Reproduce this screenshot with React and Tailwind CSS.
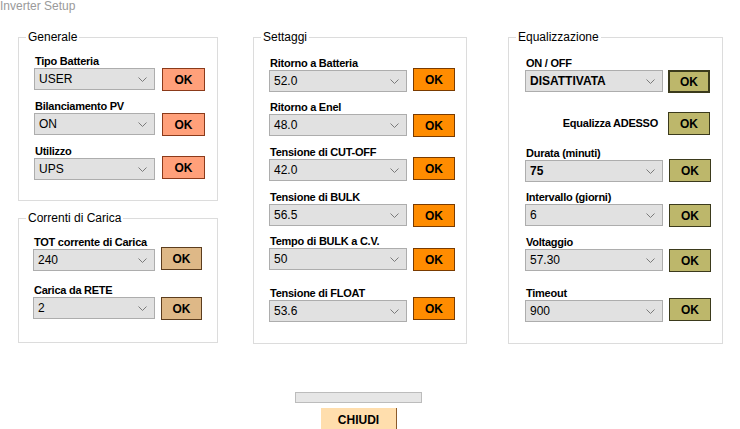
import React from "react";

const font = { fontFamily: '"Liberation Sans", Arial, sans-serif' };

// button palettes per section
const tones = {
  salmon: "bg-[#ffa07a] border-[#8b3a1a]",
  wood: "bg-[#deb887] border-[#5c3d1e]",
  orange: "bg-[#ff8c00] border-[#7a3b00]",
  khaki: "bg-[#bdb76b] border-[#3b3a1c]",
};

function Chevron() {
  return (
    <svg width="9" height="5" viewBox="0 0 9 5" className="shrink-0">
      <polyline points="0.5,0.5 4.5,4.5 8.5,0.5" fill="none" stroke="#7a7a7a" strokeWidth="1" />
    </svg>
  );
}

function Combo({ value, width, bold }) {
  return (
    <div
      className={`h-[22px] ${width} flex items-center justify-between pl-[4px] pr-[7px] bg-[#e1e1e1] border border-[#adadad] text-[12px] text-black ${bold ? "font-bold" : ""}`}
    >
      <span className="leading-none">{value}</span>
      <Chevron />
    </div>
  );
}

function OkButton({ tone, width = "w-[43px]", thick, className = "" }) {
  return (
    <button
      className={`h-[23px] ${width} ${tones[tone]} ${thick ? "border-2" : "border"} text-[12px] font-bold text-black leading-none flex items-center justify-center ${className}`}
    >
      OK
    </button>
  );
}

function Field({ label, value, comboW, tone, okW, gap, mt, btnClass, bold, thick }) {
  return (
    <div className={`flex flex-col ${mt}`}>
      <div className="h-[13px] leading-[12px] text-[11px] font-bold tracking-[-0.25px] text-black pl-[1px] whitespace-nowrap">{label}</div>
      <div className={`flex items-start ${gap}`}>
        <Combo value={value} width={comboW} bold={bold} />
        <OkButton tone={tone} width={okW} thick={thick} className={btnClass} />
      </div>
    </div>
  );
}

function GroupBox({ title, className, children }) {
  return (
    <fieldset className={`border border-[#dcdcdc] ${className}`}>
      <legend className="ml-[7px] px-[2px] text-[12px] leading-[14px] text-black">{title}</legend>
      {children}
    </fieldset>
  );
}

export default function App() {
  return (
    <div className="w-[740px] h-[429px] overflow-hidden bg-white flex flex-col" style={font}>
      <div className="text-[12px] leading-[13px] text-[#9a9a9a] h-[12px]">Inverter Setup</div>

      <div className="flex items-start pl-[18px] mt-[18px]">
        {/* left column */}
        <div className="flex flex-col w-[200px]">
          <GroupBox title="Generale" className="h-[171px]">
            <div className="flex flex-col pl-[15px] pt-[11px]">
              <Field label="Tipo Batteria" value="USER" comboW="w-[121px]" tone="salmon" gap="gap-[7px]" mt="" />
              <Field label="Bilanciamento PV" value="ON" comboW="w-[121px]" tone="salmon" gap="gap-[7px]" mt="mt-[9px]" />
              <Field label="Utilizzo" value="UPS" comboW="w-[121px]" tone="salmon" gap="gap-[7px]" mt="mt-[9px]" btnClass="-mt-[2px]" />
            </div>
          </GroupBox>
          <GroupBox title="Correnti di Carica" className="h-[132px] mt-[10px]">
            <div className="flex flex-col pl-[14px] pt-[11px]">
              <Field label="TOT corrente di Carica" value="240" comboW="w-[122px]" tone="wood" okW="w-[41px]" gap="gap-[6px]" mt="" btnClass="-mt-[2px]" />
              <Field label="Carica da RETE" value="2" comboW="w-[122px]" tone="wood" okW="w-[41px]" gap="gap-[6px]" mt="mt-[13px]" />
            </div>
          </GroupBox>
        </div>

        {/* middle column */}
        <GroupBox title="Settaggi" className="w-[214px] h-[314px] ml-[35px]">
          <div className="flex flex-col pl-[15px] pt-[13px]">
            <Field label="Ritorno a Batteria" value="52.0" comboW="w-[138px]" tone="orange" okW="w-[42px]" gap="gap-[6px]" mt="" btnClass="-mt-[2px]" />
            <Field label="Ritorno a Enel" value="48.0" comboW="w-[138px]" tone="orange" okW="w-[42px]" gap="gap-[6px]" mt="mt-[9px]" />
            <Field label="Tensione di CUT-OFF" value="42.0" comboW="w-[138px]" tone="orange" okW="w-[42px]" gap="gap-[6px]" mt="mt-[9px]" btnClass="-mt-[2px]" />
            <Field label="Tensione di BULK" value="56.5" comboW="w-[138px]" tone="orange" okW="w-[42px]" gap="gap-[6px]" mt="mt-[10px]" />
            <Field label="Tempo di BULK a C.V." value="50" comboW="w-[138px]" tone="orange" okW="w-[42px]" gap="gap-[6px]" mt="mt-[8px]" />
            <Field label="Tensione di FLOAT" value="53.6" comboW="w-[138px]" tone="orange" okW="w-[42px]" gap="gap-[6px]" mt="mt-[16px]" btnClass="-mt-[3px]" />
          </div>
        </GroupBox>

        {/* right column */}
        <GroupBox title="Equalizzazione" className="w-[215px] h-[314px] ml-[41px]">
          <div className="flex flex-col pl-[16px] pt-[13px]">
            <Field label="ON / OFF" value="DISATTIVATA" comboW="w-[138px]" tone="khaki" okW="w-[42px]" gap="gap-[5px]" mt="" bold thick />
            <div className="flex items-center justify-end gap-[10px] mt-[19px] w-[185px]">
              <span className="text-[11px] font-bold tracking-[-0.25px] text-black whitespace-nowrap">Equalizza ADESSO</span>
              <OkButton tone="khaki" width="w-[42px]" />
            </div>
            <Field label="Durata (minuti)" value="75" comboW="w-[138px]" tone="khaki" okW="w-[42px]" gap="gap-[6px]" mt="mt-[12px]" bold btnClass="-mt-[1px]" />
            <Field label="Intervallo (giorni)" value="6" comboW="w-[138px]" tone="khaki" okW="w-[42px]" gap="gap-[6px]" mt="mt-[9px]" />
            <Field label="Voltaggio" value="57.30" comboW="w-[138px]" tone="khaki" okW="w-[42px]" gap="gap-[6px]" mt="mt-[9px]" />
            <Field label="Timeout" value="900" comboW="w-[138px]" tone="khaki" okW="w-[42px]" gap="gap-[6px]" mt="mt-[15px]" btnClass="-mt-[2px]" />
          </div>
        </GroupBox>
      </div>

      {/* footer */}
      <div className="flex flex-col items-start">
        <div className="ml-[295px] mt-[48px] w-[127px] h-[11px] bg-[#e6e6e6] border border-[#bcbcbc]" />
        <button className="ml-[321px] mt-[5px] w-[76px] h-[24px] bg-[#ffdead] border-r border-[#8b5a2b] text-[12px] font-bold text-black leading-none flex items-center justify-center">
          CHIUDI
        </button>
      </div>
    </div>
  );
}
